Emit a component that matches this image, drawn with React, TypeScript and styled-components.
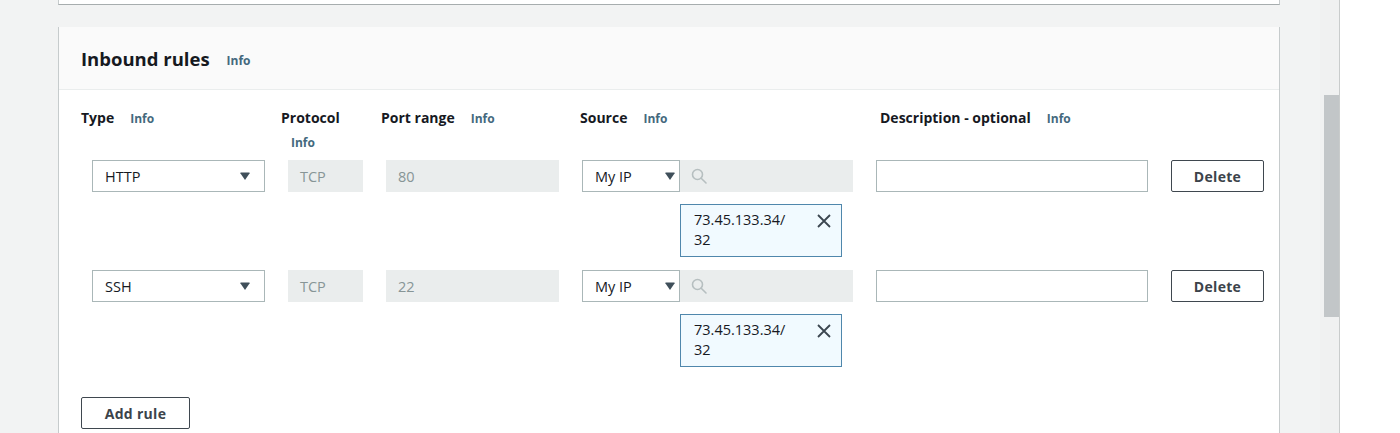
import React from 'react';
import styled, { createGlobalStyle } from 'styled-components';

const GlobalStyle = createGlobalStyle`
  html, body {
    margin: 0;
    padding: 0;
    background: #ffffff;
    font-family: "Open Sans", "Noto Sans", Arial, sans-serif;
    color: #16191f;
  }
`;

const Page = styled.div`
  display: flex;
  width: 1400px;
  height: 433px;
  overflow: hidden;
`;

const Main = styled.div`
  width: 1280px;
  padding-left: 58px;
  box-sizing: border-box;
  background: #f2f3f3;
  display: flex;
  flex-direction: column;
  gap: 22px;
`;

const Gutter = styled.div`
  width: 40px;
  background: #f2f3f3;
`;

const Track = styled.div`
  width: 20px;
  background: #f0f1f1;
  border-right: 1px solid #c9cccc;
  padding-top: 95px;
  padding-left: 4px;
  box-sizing: border-box;
`;

const Thumb = styled.div`
  height: 222px;
  background: #c2c6c8;
`;

const Card = styled.div<{ $stub?: boolean }>`
  background: #ffffff;
  border-left: 1px solid #c6cbcc;
  border-right: 1px solid #c6cbcc;
  ${p => p.$stub ? `
    height: 4px;
    border-bottom: 1px solid #a7adae;
  ` : `
    flex: 1;
  `}
`;

const CardHeader = styled.div`
  height: 63px;
  background: #fafafa;
  border-bottom: 1px solid #eaeded;
  box-sizing: border-box;
  display: flex;
  align-items: center;
  padding: 0 22px;
`;

const Title = styled.h2`
  margin: 0;
  font-size: 18.5px;
  font-weight: 700;
`;

const InfoLink = styled.span<{ $block?: boolean; $title?: boolean }>`
  font-size: 12px;
  font-weight: 700;
  color: #44697d;
  ${p => p.$block
    ? 'display: block; margin-top: 5px; padding-left: 10px;'
    : p.$title ? 'margin-left: 17px; margin-top: 4px;' : 'margin-left: 16px;'}
`;

const Body = styled.div`
  padding: 18px 0 0 22px;
`;

const HeaderRow = styled.div`
  display: grid;
  grid-template-columns: 200px 100px 199px 300px 1fr;
  height: 52px;
`;

const Label = styled.div`
  font-size: 14px;
  font-weight: 700;
  line-height: 20px;
`;

const RuleRow = styled.div`
  display: grid;
  grid-template-columns: 173px 75px 173px 271px 272px 93px;
  column-gap: 23px;
  padding-left: 11px;
  margin-bottom: 13px;
`;

const Select = styled.div<{ $width?: number }>`
  height: 32px;
  box-sizing: border-box;
  border: 1px solid #aab7b8;
  background: #ffffff;
  display: flex;
  align-items: center;
  justify-content: space-between;
  padding: 0 14px 0 12px;
  font-size: 14.5px;
  ${p => p.$width ? `width: ${p.$width}px; padding-right: 4px;` : ''}
`;

const Disabled = styled.div`
  height: 32px;
  box-sizing: border-box;
  background: #eaeded;
  display: flex;
  align-items: center;
  padding: 0 12px;
  font-size: 14.5px;
  color: #879596;
`;

const SourceCell = styled.div`
  display: flex;
  flex-direction: column;
`;

const SourceControls = styled.div`
  display: flex;
`;

const Search = styled.div`
  flex: 1;
  height: 32px;
  background: #eaeded;
  display: flex;
  align-items: center;
  padding-left: 10px;
`;

const Token = styled.div`
  margin-top: 12px;
  margin-left: 98px;
  width: 162px;
  box-sizing: border-box;
  border: 1px solid #4f87ac;
  background: #f1faff;
  padding: 5px 9px 6px 13px;
  display: flex;
  justify-content: space-between;
  align-items: flex-start;
  font-size: 14.5px;
  line-height: 20px;
`;

const TokenText = styled.div`
  width: 104px;
`;

const TextInput = styled.div`
  height: 32px;
  box-sizing: border-box;
  border: 1px solid #aab7b8;
  background: #ffffff;
`;

const Button = styled.button<{ $width: number }>`
  width: ${p => p.$width}px;
  height: 32px;
  box-sizing: border-box;
  border: 1px solid #3f474f;
  border-radius: 2px;
  background: #ffffff;
  font-family: inherit;
  font-size: 14px;
  font-weight: 700;
  color: #3c434a;
  letter-spacing: 0.3px;
  padding: 0;
`;

const Footer = styled.div`
  margin-top: 30px;
`;

const Caret = () => (
  <svg width="10" height="9" viewBox="0 0 10 9">
    <path d="M0.5 1.5 L9.5 1.5 L5 8 Z" fill="#3f4f5a" />
    <rect x="0.5" y="0.5" width="9" height="1.5" fill="#3f4f5a" />
  </svg>
);

const SearchIcon = () => (
  <svg width="18" height="18" viewBox="0 0 18 18" fill="none" stroke="#b6bfc0" strokeWidth="1.6">
    <circle cx="7.5" cy="7.5" r="5" />
    <path d="M11.2 11.2 L16 16" strokeLinecap="round" />
  </svg>
);

const CloseIcon = () => (
  <svg width="16" height="16" viewBox="0 0 16 16" stroke="#3b4650" strokeWidth="1.8" style={{ marginTop: 3 }}>
    <path d="M2 2 L14 14 M14 2 L2 14" />
  </svg>
);

const rules = [
  { type: 'HTTP', protocol: 'TCP', port: '80', ip: '73.45.133.34', mask: '32' },
  { type: 'SSH', protocol: 'TCP', port: '22', ip: '73.45.133.34', mask: '32' },
];

const App: React.FC = () => (
  <>
    <GlobalStyle />
    <Page>
      <Main>
        <Card $stub />
        <Card>
          <CardHeader>
            <Title>Inbound rules</Title>
            <InfoLink $title>Info</InfoLink>
          </CardHeader>
          <Body>
            <HeaderRow>
              <Label>Type<InfoLink>Info</InfoLink></Label>
              <Label>Protocol<InfoLink $block>Info</InfoLink></Label>
              <Label>Port range<InfoLink>Info</InfoLink></Label>
              <Label>Source<InfoLink>Info</InfoLink></Label>
              <Label>Description - optional<InfoLink>Info</InfoLink></Label>
            </HeaderRow>
            {rules.map(rule => (
              <RuleRow key={rule.type}>
                <Select>{rule.type}<Caret /></Select>
                <Disabled>{rule.protocol}</Disabled>
                <Disabled>{rule.port}</Disabled>
                <SourceCell>
                  <SourceControls>
                    <Select $width={98}>My IP<Caret /></Select>
                    <Search><SearchIcon /></Search>
                  </SourceControls>
                  <Token>
                    <TokenText>{rule.ip}/<wbr />{rule.mask}</TokenText>
                    <CloseIcon />
                  </Token>
                </SourceCell>
                <TextInput />
                <Button $width={93}>Delete</Button>
              </RuleRow>
            ))}
            <Footer>
              <Button $width={109}>Add rule</Button>
            </Footer>
          </Body>
        </Card>
      </Main>
      <Gutter />
      <Track><Thumb /></Track>
    </Page>
  </>
);

export default App;
